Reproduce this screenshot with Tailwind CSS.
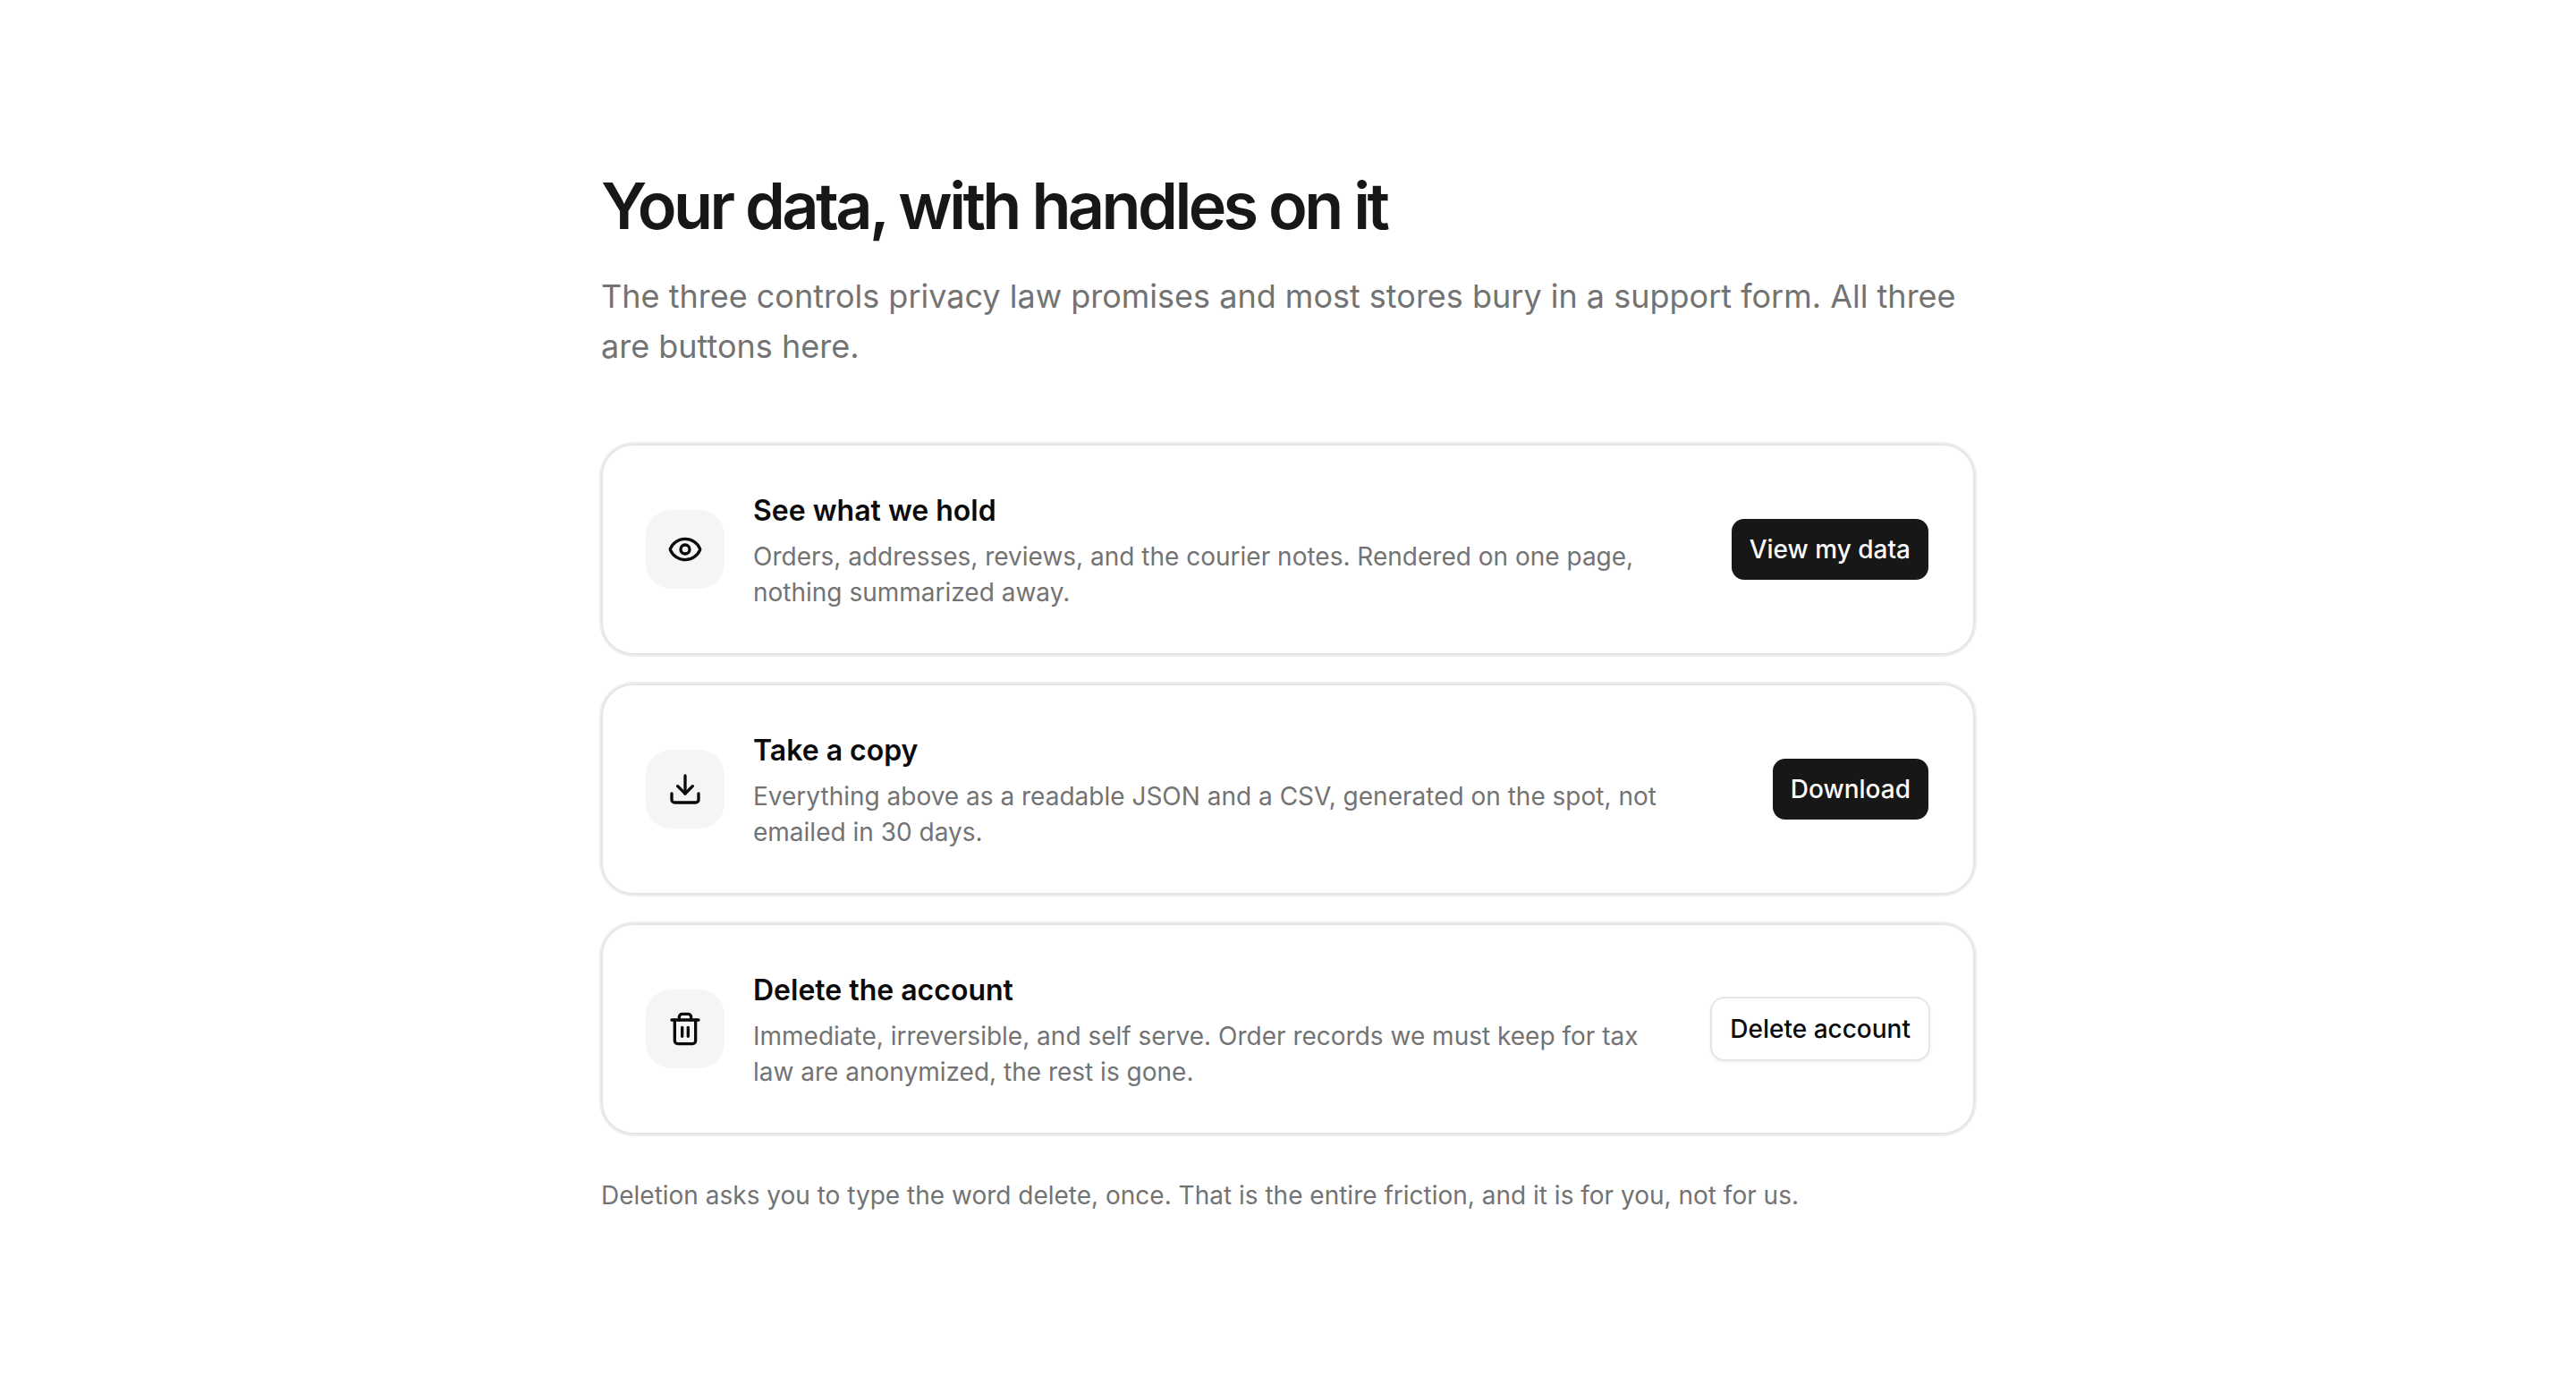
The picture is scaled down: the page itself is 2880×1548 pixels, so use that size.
<!DOCTYPE html>
<html lang="en">
<head>
<meta charset="utf-8">
<title>Your data</title>
<script src="https://cdn.jsdelivr.net/npm/@tailwindcss/browser@4"></script>
</head>
<body class="bg-white font-['Inter',sans-serif] text-neutral-950">
<main class="mx-auto w-[1536px] py-48">
  <h1 class="text-[72px] leading-[75px] font-semibold tracking-[-0.05em] text-neutral-900">Your data, with handles on it</h1>
  <p class="mt-9 text-[36px] leading-14 text-neutral-500">The three controls privacy law promises and most stores bury in a support form. All three are buttons here.</p>

  <div class="mt-[81px] flex flex-col gap-8">
    <section class="flex items-center gap-8 rounded-[36px] border-2 border-neutral-200 p-12 ring-2 ring-[#eeeeee]">
      <div class="flex size-22 shrink-0 items-center justify-center rounded-[28px] bg-neutral-100">
        <svg class="size-10" viewBox="0 0 24 24" fill="none" stroke="currentColor" stroke-width="2" stroke-linecap="round" stroke-linejoin="round"><path d="M2.062 12.348a1 1 0 0 1 0-.696 10.75 10.75 0 0 1 19.876 0 1 1 0 0 1 0 .696 10.75 10.75 0 0 1-19.876 0"/><circle cx="12" cy="12" r="3"/></svg>
      </div>
      <div class="min-w-0 flex-1">
        <h2 class="text-[32px] leading-[49px] font-semibold">See what we hold</h2>
        <p class="mt-[7px] text-[28px] leading-10 text-neutral-500">Orders, addresses, reviews, and the courier notes. Rendered on one page, nothing summarized away.</p>
      </div>
      <button class="h-18 shrink-0 rounded-2xl border-2 border-transparent bg-neutral-900 bg-clip-padding px-5 text-[28px] leading-10 font-medium text-neutral-50">View my data</button>
    </section>

    <section class="flex items-center gap-8 rounded-[36px] border-2 border-neutral-200 p-12 ring-2 ring-[#eeeeee]">
      <div class="flex size-22 shrink-0 items-center justify-center rounded-[28px] bg-neutral-100">
        <svg class="size-10" viewBox="0 0 24 24" fill="none" stroke="currentColor" stroke-width="2" stroke-linecap="round" stroke-linejoin="round"><path d="M12 15V3"/><path d="M21 15v4a2 2 0 0 1-2 2H5a2 2 0 0 1-2-2v-4"/><path d="m7 10 5 5 5-5"/></svg>
      </div>
      <div class="min-w-0 flex-1">
        <h2 class="text-[32px] leading-[49px] font-semibold">Take a copy</h2>
        <p class="mt-[7px] text-[28px] leading-10 text-neutral-500">Everything above as a readable JSON and a CSV, generated on the spot, not emailed in 30 days.</p>
      </div>
      <button class="h-18 shrink-0 rounded-2xl border-2 border-transparent bg-neutral-900 bg-clip-padding px-5 text-[28px] leading-10 font-medium text-neutral-50">Download</button>
    </section>

    <section class="flex items-center gap-8 rounded-[36px] border-2 border-neutral-200 p-12 ring-2 ring-[#eeeeee]">
      <div class="flex size-22 shrink-0 items-center justify-center rounded-[28px] bg-neutral-100">
        <svg class="size-10" viewBox="0 0 24 24" fill="none" stroke="currentColor" stroke-width="2" stroke-linecap="round" stroke-linejoin="round"><path d="M10 11v6"/><path d="M14 11v6"/><path d="M19 6v14a2 2 0 0 1-2 2H7a2 2 0 0 1-2-2V6"/><path d="M3 6h18"/><path d="M8 6V4a2 2 0 0 1 2-2h4a2 2 0 0 1 2 2v2"/></svg>
      </div>
      <div class="min-w-0 flex-1">
        <h2 class="text-[32px] leading-[49px] font-semibold">Delete the account</h2>
        <p class="mt-[7px] text-[28px] leading-10 text-neutral-500">Immediate, irreversible, and self serve. Order records we must keep for tax law are anonymized, the rest is gone.</p>
      </div>
      <button class="h-18 shrink-0 rounded-2xl border-2 border-neutral-200 bg-white bg-clip-padding px-5 text-[28px] leading-10 font-medium shadow-[0_2px_4px_rgba(0,0,0,0.05)]">Delete account</button>
    </section>
  </div>

  <p class="mt-12 text-[28px] leading-10 text-neutral-500">Deletion asks you to type the word delete, once. That is the entire friction, and it is for you, not for us.</p>
</main>
</body>
</html>
